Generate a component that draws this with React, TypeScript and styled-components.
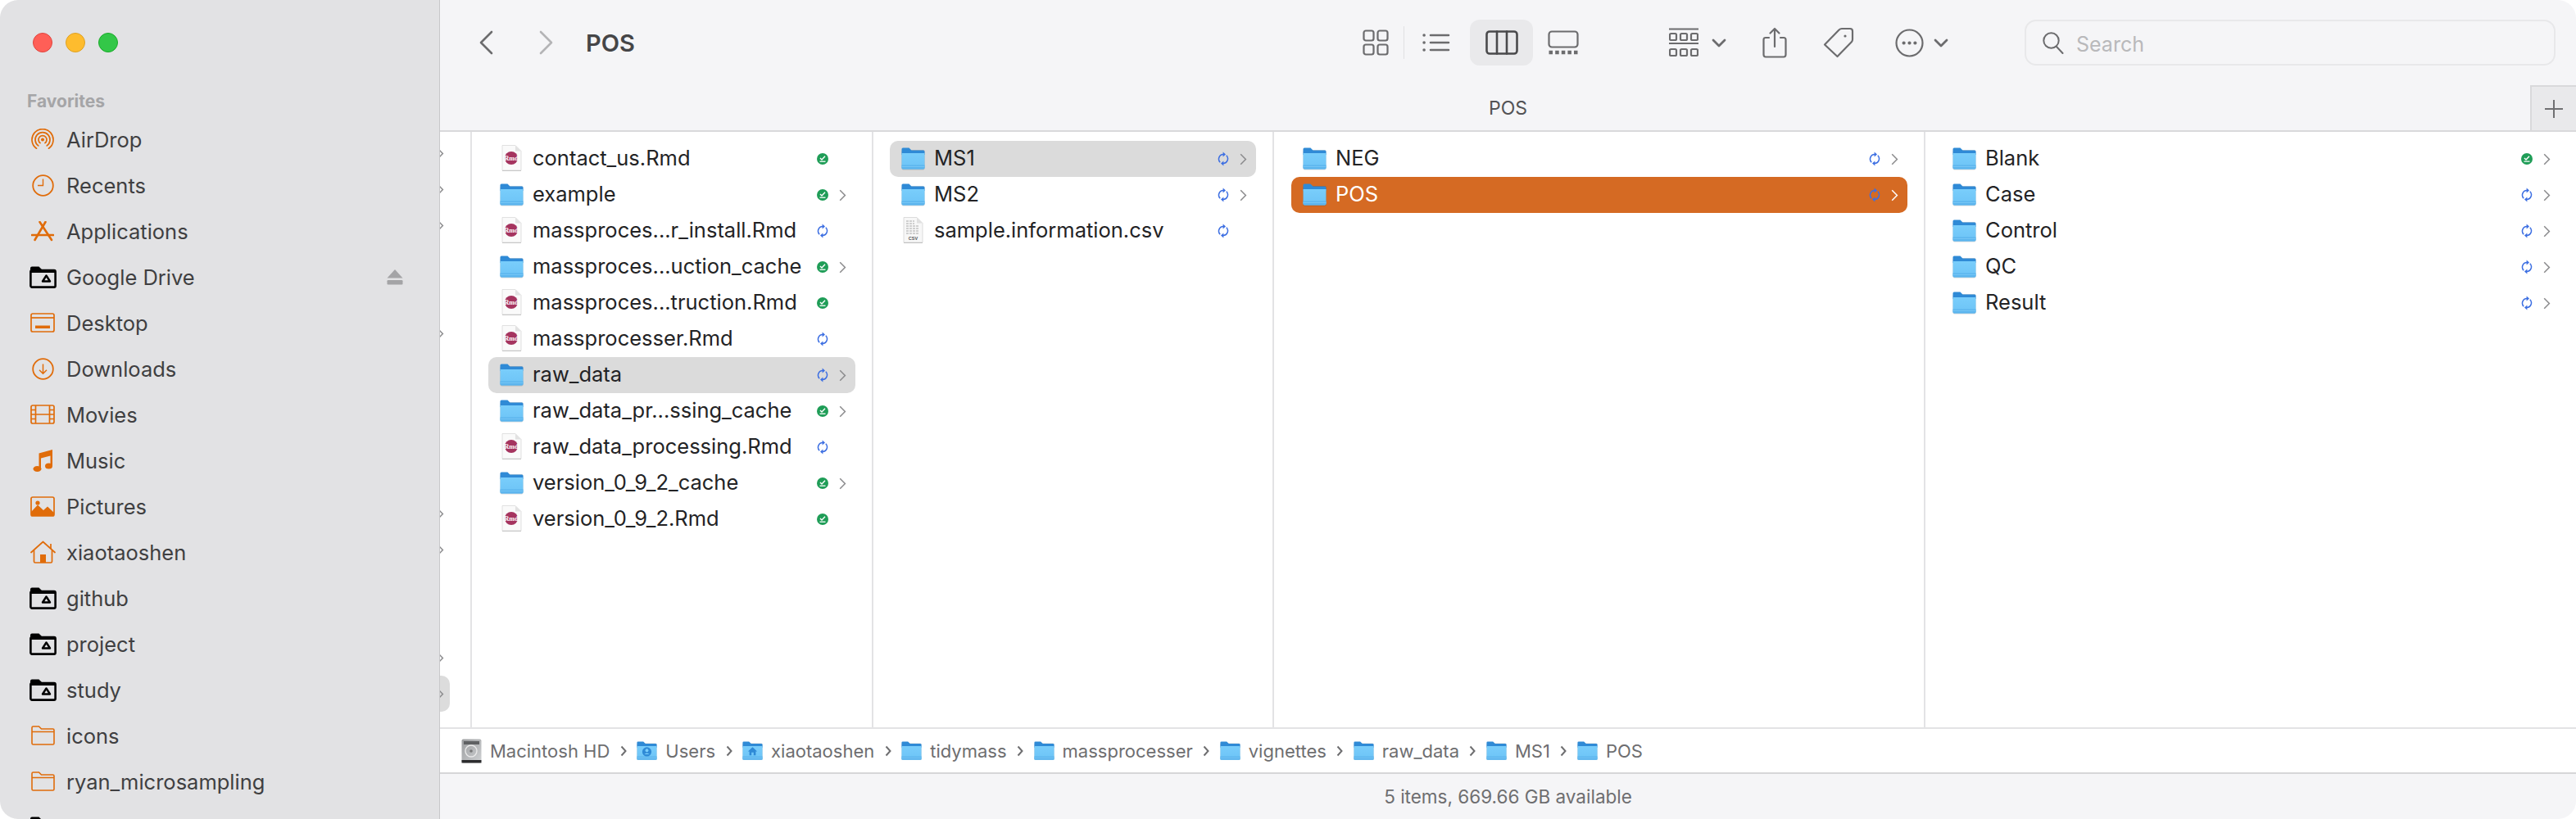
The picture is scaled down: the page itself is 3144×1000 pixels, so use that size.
import React from 'react';
import styled, { createGlobalStyle } from 'styled-components';

const ORANGE = '#e06c0a';
const TOOL = '#6c6c6e';

const AirDropIcon = () => (
	<svg width="28" height="27" viewBox="0 0 28 27" fill="none" stroke={ORANGE} strokeWidth="1.7" strokeLinecap="round">
		<path d="M6.5 24.2A13 13 0 1 1 21.5 24.2" />
		<path d="M8.8 20.9A9 9 0 1 1 19.2 20.9" />
		<path d="M11.1 17.6A5 5 0 1 1 16.9 17.6" />
		<circle cx="14" cy="13.5" r="2" fill={ORANGE} stroke="none" />
	</svg>
);

const ClockIcon = () => (
	<svg width="27" height="27" viewBox="0 0 27 27" fill="none" stroke={ORANGE} strokeWidth="1.8">
		<circle cx="13.5" cy="13.5" r="12.3" />
		<path d="M13.5 5.5V13.5H7" strokeWidth="1.4" />
	</svg>
);

const AppsIcon = () => (
	<svg width="28" height="25" viewBox="0 0 28 25" fill="none" stroke={ORANGE} strokeWidth="2.6" strokeLinecap="round">
		<path d="M10.5 1L25 23" />
		<path d="M17.5 1L4.5 23" />
		<path d="M1 17H27" />
	</svg>
);

const DriveFolderIcon = () => (
	<svg width="33" height="27" viewBox="0 0 33 27" fill="none">
		<path d="M1 8V2.5Q1 .5 3 .5H11.5L15 4H30Q32 4 32 6V8Z" fill="#000" />
		<rect x="1.4" y="5" width="30.2" height="20.6" rx="1.6" stroke="#000" strokeWidth="2.6" />
		<path d="M20.5 11.5L25 18.5H16Z" stroke="#000" strokeWidth="2.4" strokeLinejoin="round" />
	</svg>
);

const DesktopIcon = () => (
	<svg width="30" height="24" viewBox="0 0 30 24" fill="none" stroke={ORANGE} strokeWidth="1.7">
		<rect x="1" y="1" width="28" height="22" rx="2" />
		<path d="M1 6H29" />
		<rect x="6" y="15.5" width="18" height="3.5" fill={ORANGE} stroke="none" />
	</svg>
);

const DownloadsIcon = () => (
	<svg width="27" height="27" viewBox="0 0 27 27" fill="none" stroke={ORANGE} strokeWidth="1.8">
		<circle cx="13.5" cy="13.5" r="12.3" />
		<path d="M13.5 7.5V19M9 14.8L13.5 19.3L18 14.8" strokeWidth="1.5" />
	</svg>
);

const MoviesIcon = () => (
	<svg width="30" height="24" viewBox="0 0 30 24" fill="none" stroke={ORANGE} strokeWidth="1.7">
		<rect x="1" y="1" width="28" height="22" rx="2" />
		<path d="M6.5 1V23M23.5 1V23M6.5 12H23.5" />
		<path d="M1 6.5H6.5M1 12H6.5M1 17.5H6.5M23.5 6.5H29M23.5 12H29M23.5 17.5H29" strokeWidth="1.4" />
	</svg>
);

const MusicIcon = () => (
	<svg width="25" height="28" viewBox="0 0 25 28" fill={ORANGE}>
		<path d="M7.5 5.5L24 1V21H21.5V8.5L10 11.6V25H7.5Z" />
		<ellipse cx="5.5" cy="24.5" rx="5" ry="3.5" />
		<ellipse cx="19.5" cy="21" rx="4.5" ry="3.5" />
	</svg>
);

const PicturesIcon = () => (
	<svg width="30" height="25" viewBox="0 0 30 25" fill="none">
		<rect x="1" y="1" width="28" height="23" rx="2" stroke={ORANGE} strokeWidth="1.7" />
		<path d="M1 23V19L9 10.5L16 17L21 12.5L29 20V23Q29 24 28 24H2Q1 24 1 23Z" fill={ORANGE} />
		<circle cx="9" cy="8" r="2.6" fill={ORANGE} />
	</svg>
);

const HomeIcon = () => (
	<svg width="31" height="28" viewBox="0 0 31 28" fill="none" stroke={ORANGE} strokeWidth="1.7" strokeLinejoin="round">
		<path d="M1 14.5L15.5 1.5L30 14.5" strokeLinecap="round" />
		<path d="M4.5 12V25.5Q4.5 27 6 27H25Q26.5 27 26.5 25.5V12" />
		<path d="M25 4V10" />
		<rect x="12" y="17" width="7" height="10" fill={ORANGE} stroke="none" />
	</svg>
);

const OutlineFolderIcon = () => (
	<svg width="29" height="24" viewBox="0 0 29 24" fill="none" stroke={ORANGE} strokeWidth="1.6">
		<path d="M1 6V2.5Q1 1 2.5 1H9.5L12.5 4H26.5Q28 4 28 5.5V21.5Q28 23 26.5 23H2.5Q1 23 1 21.5Z" />
		<path d="M1 7.5H28" />
	</svg>
);

const EjectIcon = () => (
	<svg width="20" height="19" viewBox="0 0 20 19" fill="#a4a4a6">
		<path d="M10 0L19.5 10.5H.5Z" />
		<rect x=".5" y="13" width="19" height="5.5" rx="1.2" />
	</svg>
);

const BlueFolder = ({ size = 29, glyph }: { size?: number; glyph?: 'user' | 'home' }) => (
	<svg width={size} height={size * 0.95} viewBox="0 0 29 27.5">
		<defs>
			<linearGradient id="folderBody" x1="0" y1="0" x2="0" y2="1">
				<stop offset="0" stopColor="#79cdfb" />
				<stop offset="1" stopColor="#6cc3f6" />
			</linearGradient>
		</defs>
		<rect x=".4" y="3" width="28.2" height="24.5" rx="2" fill="#000" opacity=".16" />
		<path d="M.5 7V2Q.5 .5 2 .5H9.5L12.5 3.5H27Q28.5 3.5 28.5 5V9H.5Z" fill="#2f8ad6" />
		<path d="M.5 7H28.5V24.8Q28.5 26.5 26.8 26.5H2.2Q.5 26.5 .5 24.8Z" fill="url(#folderBody)" />
		<path d="M.5 21.5H28.5V24.8Q28.5 26.5 26.8 26.5H2.2Q.5 26.5 .5 24.8Z" fill="#5db5ee" />
		<path d="M.5 23.5H28.5" stroke="#7fcbf7" strokeWidth=".8" />
		{glyph === 'user' && (
			<g fill="#2f8ad6">
				<circle cx="14.5" cy="15" r="6.5" />
				<circle cx="14.5" cy="13" r="2.2" fill="#79cdfb" />
				<path d="M10.8 18.5Q14.5 15 18.2 18.5Z" fill="#79cdfb" />
			</g>
		)}
		{glyph === 'home' && <path d="M14.5 8.5L21 14.5H19V20H16V16H13V20H10V14.5H8Z" fill="#2f8ad6" />}
	</svg>
);

const RmdFile = () => (
	<svg width="25" height="32" viewBox="0 0 25 32">
		<path d="M1 .5H17L24 7.5V31H1Z" fill="#fafafa" stroke="#d9d9d9" strokeWidth=".8" />
		<path d="M17 .5V7.5H24Z" fill="#e2e2e2" />
		<path d="M1 31H24V31.8H1Z" fill="#bdbdbd" />
		<circle cx="12" cy="16" r="8" fill="#a5345f" />
		<text x="12" y="18.6" textAnchor="middle" fontFamily="'Liberation Serif', serif" fontWeight="700" fontSize="8" fill="#fff">
			Rmd
		</text>
	</svg>
);

const CsvFile = () => (
	<svg width="25" height="32" viewBox="0 0 25 32">
		<path d="M1 .5H17L24 7.5V31H1Z" fill="#f7f7f7" stroke="#d4d4d4" strokeWidth=".8" />
		<path d="M17 .5V7.5H24Z" fill="#e0e0e0" />
		<path d="M1 31H24V31.8H1Z" fill="#b5b5b5" />
		<path d="M4 5H14M4 8H14M4 11H20M4 14H20M4 17H20M4 20H20" stroke="#c4c4c4" strokeWidth="1.6" strokeDasharray="3 1" />
		<text x="12.5" y="28" textAnchor="middle" fontFamily="'Liberation Sans', sans-serif" fontWeight="700" fontSize="5.5" fill="#555">
			CSV
		</text>
	</svg>
);

const HddIcon = () => (
	<svg width="25" height="30" viewBox="0 0 25 30">
		<defs>
			<linearGradient id="hdd" x1="0" y1="0" x2="1" y2="1">
				<stop offset="0" stopColor="#9a9c9e" />
				<stop offset="1" stopColor="#d0d2d4" />
			</linearGradient>
		</defs>
		<rect x=".5" y=".5" width="24" height="29" rx="2" fill="url(#hdd)" />
		<rect x="3" y="3" width="19" height="4" fill="#5f6163" />
		<circle cx="12" cy="15" r="7" fill="none" stroke="#e9e9e9" strokeWidth="1.4" />
		<circle cx="12" cy="15" r="1.8" fill="#777" />
		<rect x=".5" y="26" width="24" height="3.5" fill="#2c2c2e" />
	</svg>
);

const SyncedBadge = () => (
	<svg width="14" height="14" viewBox="0 0 14 14">
		<circle cx="7" cy="7" r="7" fill="#1f9d57" />
		<path d="M4 6L6 8L10 3.8" fill="none" stroke="#fff" strokeWidth="1.4" />
		<path d="M3.5 10.2H10.5" stroke="#fff" strokeWidth="1.3" />
	</svg>
);

const SyncingBadge = () => (
	<svg width="14" height="18" viewBox="0 0 14 18" fill="none" stroke="#3d6fe2" strokeWidth="1.5">
		<path d="M7 3.6A5.6 5.6 0 0 0 3.2 13.2" />
		<path d="M7 14.4A5.6 5.6 0 0 0 10.8 4.8" />
		<path d="M6.6 .6L10 3.6L6.6 6.6Z" fill="#3d6fe2" stroke="none" />
		<path d="M7.4 11.4L4 14.4L7.4 17.4Z" fill="#3d6fe2" stroke="none" />
	</svg>
);

const RowChevron = ({ color = '#8a8a8c' }: { color?: string }) => (
	<svg width="9" height="15" viewBox="0 0 9 15" fill="none" stroke={color} strokeWidth="1.5">
		<path d="M1.2 1.2L7.4 7.5L1.2 13.8" />
	</svg>
);

const Stroke = ({ w, h, children, color = TOOL, sw = 2.2 }: { w: number; h: number; children: React.ReactNode; color?: string; sw?: number }) => (
	<svg width={w} height={h} viewBox={`0 0 ${w} ${h}`} fill="none" stroke={color} strokeWidth={sw} strokeLinecap="round" strokeLinejoin="round">
		{children}
	</svg>
);

const smallRow = (y: number) => (
	<>
		<rect x="1" y={y} width="8" height="8" rx="1.5" />
		<rect x="14" y={y} width="8" height="8" rx="1.5" />
		<rect x="27" y={y} width="8" height="8" rx="1.5" />
	</>
);

type Kind = 'folder' | 'rmd' | 'csv';
type Item = { name: string; kind: Kind; synced?: boolean; selected?: 'gray' | 'orange' };

const sidebarItems: { label: string; icon: React.ReactNode; eject?: boolean }[] = [
	{ label: 'AirDrop', icon: <AirDropIcon /> },
	{ label: 'Recents', icon: <ClockIcon /> },
	{ label: 'Applications', icon: <AppsIcon /> },
	{ label: 'Google Drive', icon: <DriveFolderIcon />, eject: true },
	{ label: 'Desktop', icon: <DesktopIcon /> },
	{ label: 'Downloads', icon: <DownloadsIcon /> },
	{ label: 'Movies', icon: <MoviesIcon /> },
	{ label: 'Music', icon: <MusicIcon /> },
	{ label: 'Pictures', icon: <PicturesIcon /> },
	{ label: 'xiaotaoshen', icon: <HomeIcon /> },
	{ label: 'github', icon: <DriveFolderIcon /> },
	{ label: 'project', icon: <DriveFolderIcon /> },
	{ label: 'study', icon: <DriveFolderIcon /> },
	{ label: 'icons', icon: <OutlineFolderIcon /> },
	{ label: 'ryan_microsampling', icon: <OutlineFolderIcon /> },
	{ label: '', icon: <DriveFolderIcon /> },
];

const columns: { width: number; left: number; items: Item[] }[] = [
	{
		width: 490,
		left: 20,
		items: [
			{ name: 'contact_us.Rmd', kind: 'rmd', synced: true },
			{ name: 'example', kind: 'folder', synced: true },
			{ name: 'massproces...r_install.Rmd', kind: 'rmd' },
			{ name: 'massproces...uction_cache', kind: 'folder', synced: true },
			{ name: 'massproces...truction.Rmd', kind: 'rmd', synced: true },
			{ name: 'massprocesser.Rmd', kind: 'rmd' },
			{ name: 'raw_data', kind: 'folder', selected: 'gray' },
			{ name: 'raw_data_pr...ssing_cache', kind: 'folder', synced: true },
			{ name: 'raw_data_processing.Rmd', kind: 'rmd' },
			{ name: 'version_0_9_2_cache', kind: 'folder', synced: true },
			{ name: 'version_0_9_2.Rmd', kind: 'rmd', synced: true },
		],
	},
	{
		width: 489,
		left: 20,
		items: [
			{ name: 'MS1', kind: 'folder', selected: 'gray' },
			{ name: 'MS2', kind: 'folder' },
			{ name: 'sample.information.csv', kind: 'csv' },
		],
	},
	{
		width: 795,
		left: 21,
		items: [
			{ name: 'NEG', kind: 'folder' },
			{ name: 'POS', kind: 'folder', selected: 'orange' },
		],
	},
	{
		width: 794,
		left: 19,
		items: [
			{ name: 'Blank', kind: 'folder', synced: true },
			{ name: 'Case', kind: 'folder' },
			{ name: 'Control', kind: 'folder' },
			{ name: 'QC', kind: 'folder' },
			{ name: 'Result', kind: 'folder' },
		],
	},
];

const pathItems: { label: string; icon: React.ReactNode }[] = [
	{ label: 'Macintosh HD', icon: <HddIcon /> },
	{ label: 'Users', icon: <BlueFolder size={25} glyph="user" /> },
	{ label: 'xiaotaoshen', icon: <BlueFolder size={25} glyph="home" /> },
	{ label: 'tidymass', icon: <BlueFolder size={25} /> },
	{ label: 'massprocesser', icon: <BlueFolder size={25} /> },
	{ label: 'vignettes', icon: <BlueFolder size={25} /> },
	{ label: 'raw_data', icon: <BlueFolder size={25} /> },
	{ label: 'MS1', icon: <BlueFolder size={25} /> },
	{ label: 'POS', icon: <BlueFolder size={25} /> },
];

// the scrolled-off column only shows a sliver of its disclosure arrows
const stubRows = [0, 1, 2, 5, 10, 11, 14, 15];

const App = () => {
	return (
		<>
			<GlobalStyle />
			<Window>
				<Sidebar>
					<TrafficLights>
						<Light $color="#ff5f57" $edge="#e0443e" />
						<Light $color="#febc2e" $edge="#dea123" />
						<Light $color="#33c748" $edge="#1aab29" />
					</TrafficLights>
					<SectionTitle>Favorites</SectionTitle>
					{sidebarItems.map((item, i) => (
						<SidebarRow key={i}>
							<SidebarIcon>{item.icon}</SidebarIcon>
							<span>{item.label}</span>
							{item.eject && (
								<EjectSlot>
									<EjectIcon />
								</EjectSlot>
							)}
						</SidebarRow>
					))}
				</Sidebar>

				<Main>
					<Toolbar>
						<NavButton>
							<Stroke w={20} h={30} sw={2.6}>
								<path d="M16 2L3 15L16 28" />
							</Stroke>
						</NavButton>
						<NavButton>
							<Stroke w={20} h={30} sw={2.6} color="#b4b4b6">
								<path d="M4 2L17 15L4 28" />
							</Stroke>
						</NavButton>
						<Title>POS</Title>

						<ViewGroup>
							<ToolButton $w={68}>
								<Stroke w={32} h={32}>
									<rect x="1.5" y="1.5" width="12" height="12" rx="2.5" />
									<rect x="18.5" y="1.5" width="12" height="12" rx="2.5" />
									<rect x="1.5" y="18.5" width="12" height="12" rx="2.5" />
									<rect x="18.5" y="18.5" width="12" height="12" rx="2.5" />
								</Stroke>
							</ToolButton>
							<ViewDivider />
							<ToolButton $w={78}>
								<Stroke w={34} h={24} sw={2.6}>
									<path d="M10 3H32M10 12H32M10 21H32" />
									<path d="M2 3H2.2M2 12H2.2M2 21H2.2" strokeWidth="3.4" />
								</Stroke>
							</ToolButton>
							<ActiveView>
								<Stroke w={40} h={30} color="#4a4a4c" sw={2.6}>
									<rect x="1.5" y="1.5" width="37" height="27" rx="3.5" />
									<path d="M14 1.5V28.5M26 1.5V28.5" />
								</Stroke>
							</ActiveView>
							<ToolButton $w={74}>
								<Stroke w={38} h={30}>
									<rect x="1.5" y="1.5" width="35" height="19" rx="3.5" />
									<path d="M1.5 27H6M9.2 27H13.7M16.8 27H21.3M24.4 27H28.9M32 27H36.5" strokeWidth="4.5" strokeLinecap="butt" />
								</Stroke>
							</ToolButton>
						</ViewGroup>

						<ActionGroup>
							<ToolButton $w={50}>
								<Stroke w={36} h={36}>
									<path d="M0 1.5H36M0 19H36" strokeLinecap="butt" />
									{smallRow(7)}
									{smallRow(26)}
								</Stroke>
							</ToolButton>
							<ToolButton $w={36}>
								<Stroke w={18} h={11} sw={2.8}>
									<path d="M2 2L9 9L16 2" />
								</Stroke>
							</ToolButton>
							<ToolButton $w={50} $ml={25}>
								<Stroke w={30} h={38}>
									<path d="M8 13H4Q1.5 13 1.5 15.5V33.5Q1.5 36.5 4 36.5H26Q28.5 36.5 28.5 33.5V15.5Q28.5 13 26 13H22" />
									<path d="M15 24V2M9.5 7.5L15 2L20.5 7.5" />
								</Stroke>
							</ToolButton>
							<ToolButton $w={50} $ml={28}>
								<Stroke w={38} h={38}>
									<path d="M23 2H33Q36 2 36 5V15Q36 17 35 18L17.5 36L2 21.5L19.5 3.5Q21 2 23 2Z" />
									<circle cx="27" cy="11" r="1.6" fill={TOOL} stroke="none" />
								</Stroke>
							</ToolButton>
							<ToolButton $w={50} $ml={36}>
								<Stroke w={35} h={35}>
									<circle cx="17.5" cy="17.5" r="16" />
									<path d="M10.5 17.5H10.7M17.4 17.5H17.6M24.3 17.5H24.5" strokeWidth="4" />
								</Stroke>
							</ToolButton>
							<ToolButton $w={28}>
								<Stroke w={18} h={11} sw={2.8}>
									<path d="M2 2L9 9L16 2" />
								</Stroke>
							</ToolButton>
						</ActionGroup>

						<SearchBox>
							<Stroke w={26} h={27} sw={2}>
								<circle cx="10.5" cy="10.5" r="9.2" />
								<path d="M17 18L24.5 26" />
							</Stroke>
							<SearchText>Search</SearchText>
						</SearchBox>
					</Toolbar>

					<TabBar>
						<TabTitle>POS</TabTitle>
						<NewTab>
							<svg width="22" height="22" viewBox="0 0 22 22" stroke="#707072" strokeWidth="2">
								<path d="M11 0V22M0 11H22" />
							</svg>
						</NewTab>
					</TabBar>

					<Browser>
						<StubColumn>
							{Array.from({ length: 16 }, (_, i) => (
								<StubRow key={i} $active={i === 15}>
									{stubRows.includes(i) && <RowChevron />}
								</StubRow>
							))}
						</StubColumn>

						{columns.map((col) => (
							<Column key={col.items[0].name} $width={col.width} $left={col.left}>
								{col.items.map((item) => (
									<Row key={item.name} $selected={item.selected}>
										<FileIcon $raised={item.kind !== 'folder'}>
											{item.kind === 'folder' && <BlueFolder />}
											{item.kind === 'rmd' && <RmdFile />}
											{item.kind === 'csv' && <CsvFile />}
										</FileIcon>
										<FileName>{item.name}</FileName>
										<Badge>{item.synced ? <SyncedBadge /> : <SyncingBadge />}</Badge>
										<Disclosure>
											{item.kind === 'folder' && <RowChevron color={item.selected === 'orange' ? '#fff' : '#8a8a8c'} />}
										</Disclosure>
									</Row>
								))}
							</Column>
						))}
					</Browser>

					<PathBar>
						{pathItems.map((item, i) => (
							<React.Fragment key={item.label}>
								{i > 0 && (
									<PathSep>
										<svg width="8" height="14" viewBox="0 0 8 14" fill="none" stroke="#6e6e70" strokeWidth="2">
											<path d="M1.5 1.5L6.5 7L1.5 12.5" />
										</svg>
									</PathSep>
								)}
								{item.icon}
								<PathLabel>{item.label}</PathLabel>
							</React.Fragment>
						))}
					</PathBar>

					<StatusBar>5 items, 669.66 GB available</StatusBar>
				</Main>
			</Window>
		</>
	);
};

const GlobalStyle = createGlobalStyle`
	html,
	body {
		margin: 0;
		height: 1000px;
		overflow: hidden;
		background: #fff;
	}

	svg {
		display: block;
		flex-shrink: 0;
	}
`;

const Window = styled.div`
	display: flex;
	width: 3144px;
	height: 1000px;
	overflow: hidden;
	border-radius: 22px;
	font-family: Inter, 'Liberation Sans', sans-serif;
`;

const Sidebar = styled.aside`
	width: 537px;
	flex-shrink: 0;
	height: 1000px;
	box-sizing: border-box;
	padding-top: 40px;
	overflow: hidden;
	background: #e2e2e4;
	border-right: 1px solid #c8c8ca;
`;

const TrafficLights = styled.div`
	display: flex;
	gap: 16px;
	padding-left: 40px;
`;

const Light = styled.span<{ $color: string; $edge: string }>`
	width: 24px;
	height: 24px;
	box-sizing: border-box;
	border-radius: 50%;
	background: ${(p) => p.$color};
	border: 1px solid ${(p) => p.$edge};
`;

const SectionTitle = styled.div`
	margin: 46px 0 4px;
	padding-left: 33px;
	font-size: 21px;
	line-height: 28px;
	font-weight: 700;
	color: #a5a5a7;
`;

const SidebarRow = styled.div`
	display: flex;
	align-items: center;
	height: 56px;
	padding-left: 33px;
	font-size: 25.5px;
	color: #3f3f41;
`;

const SidebarIcon = styled.span`
	display: flex;
	align-items: center;
	justify-content: center;
	width: 38px;
	margin-right: 10px;
`;

const EjectSlot = styled.span`
	margin-left: auto;
	margin-right: 44px;
`;

const Main = styled.main`
	display: flex;
	flex-direction: column;
	flex: 1;
	min-width: 0;
	height: 1000px;
	background: #fff;
`;

const Toolbar = styled.header`
	display: flex;
	align-items: center;
	height: 104px;
	flex-shrink: 0;
	box-sizing: border-box;
	padding: 0 25px 0 21px;
	background: #f5f5f7;
`;

const NavButton = styled.div`
	display: flex;
	align-items: center;
	justify-content: center;
	width: 72px;
	height: 56px;
`;

const Title = styled.div`
	margin-left: 13px;
	font-size: 29px;
	font-weight: 600;
	color: #454547;
`;

const ViewGroup = styled.div`
	display: flex;
	align-items: center;
	margin-left: auto;
`;

const ToolButton = styled.div<{ $w: number; $ml?: number }>`
	display: flex;
	align-items: center;
	justify-content: center;
	width: ${(p) => p.$w}px;
	height: 56px;
	margin-left: ${(p) => p.$ml ?? 0}px;
`;

const ViewDivider = styled.span`
	width: 1px;
	height: 40px;
	background: #e1e1e3;
`;

const ActiveView = styled(ToolButton).attrs({ $w: 77 })`
	margin-left: 2px;
	border-radius: 12px;
	background: #e9e9eb;
`;

const ActionGroup = styled.div`
	display: flex;
	align-items: center;
	margin-left: 85px;
`;

const SearchBox = styled.div`
	display: flex;
	align-items: center;
	gap: 15px;
	width: 648px;
	height: 56px;
	box-sizing: border-box;
	margin-left: 88px;
	padding-left: 20px;
	border: 2px solid #e8e8ea;
	border-radius: 14px;
`;

const SearchText = styled.span`
	padding-top: 3px;
	font-size: 25px;
	color: #b9b9bb;
`;

const TabBar = styled.div`
	display: flex;
	align-items: stretch;
	height: 57px;
	flex-shrink: 0;
	box-sizing: border-box;
	background: #f5f5f7;
	border-bottom: 2px solid #d9d9db;
`;

const TabTitle = styled.div`
	flex: 1;
	display: flex;
	align-items: center;
	justify-content: center;
	padding-left: 56px;
	font-size: 23px;
	color: #535355;
`;

const NewTab = styled.div`
	display: flex;
	align-items: center;
	justify-content: center;
	width: 56px;
	box-sizing: border-box;
	background: #e9e9eb;
	border-top: 2px solid #d9d9db;
	border-left: 2px solid #d9d9db;
`;

const Browser = styled.div`
	display: flex;
	flex: 1;
	min-height: 0;
	overflow: hidden;
`;

const StubColumn = styled.div`
	width: 39px;
	flex-shrink: 0;
	box-sizing: border-box;
	padding-top: 4px;
	border-right: 2px solid #e3e3e5;
	overflow: hidden;
`;

const StubRow = styled.div<{ $active: boolean }>`
	display: flex;
	align-items: center;
	width: 16px;
	height: 44px;
	margin-left: -4px;
	padding-left: 0;
	border-radius: 0 10px 10px 0;
	background: ${(p) => (p.$active ? '#dcdcdc' : 'transparent')};
`;

const Column = styled.section<{ $width: number; $left: number }>`
	width: ${(p) => p.$width}px;
	flex-shrink: 0;
	box-sizing: border-box;
	padding: 11px 20px 0 ${(p) => p.$left}px;
	border-right: 2px solid #e3e3e5;

	&:last-child {
		border-right: none;
	}
`;

const Row = styled.div<{ $selected?: 'gray' | 'orange' }>`
	display: flex;
	align-items: center;
	height: 44px;
	padding-left: 14px;
	border-radius: 10px;
	font-size: 25.5px;
	color: ${(p) => (p.$selected === 'orange' ? '#fff' : '#232325')};
	background: ${(p) => (p.$selected === 'orange' ? '#d56a23' : p.$selected === 'gray' ? '#dbdbdb' : 'transparent')};
`;

const FileIcon = styled.span<{ $raised: boolean }>`
	display: flex;
	justify-content: center;
	width: 29px;
	margin-right: 11px;
	padding-bottom: ${(p) => (p.$raised ? 3 : 0)}px;
`;

const FileName = styled.span`
	flex: 1;
	padding-bottom: 3px;
	white-space: nowrap;
`;

const Badge = styled.span`
	display: flex;
	justify-content: center;
	width: 24px;
`;

const Disclosure = styled.span`
	display: flex;
	justify-content: center;
	width: 24px;
	margin-right: 4px;
`;

const PathBar = styled.div`
	display: flex;
	align-items: center;
	height: 57px;
	flex-shrink: 0;
	box-sizing: border-box;
	padding-left: 26px;
	border-top: 2px solid #e3e3e5;
	border-bottom: 2px solid #d6d6d8;
	background: #fff;
`;

const PathLabel = styled.span`
	margin-left: 10px;
	font-size: 22px;
	color: #6e6e70;
`;

const PathSep = styled.span`
	display: flex;
	justify-content: center;
	width: 33px;
`;

const StatusBar = styled.footer`
	display: flex;
	align-items: center;
	justify-content: center;
	height: 55px;
	flex-shrink: 0;
	background: #f5f5f7;
	font-size: 22.5px;
	color: #6e6e70;
`;

export default App;
